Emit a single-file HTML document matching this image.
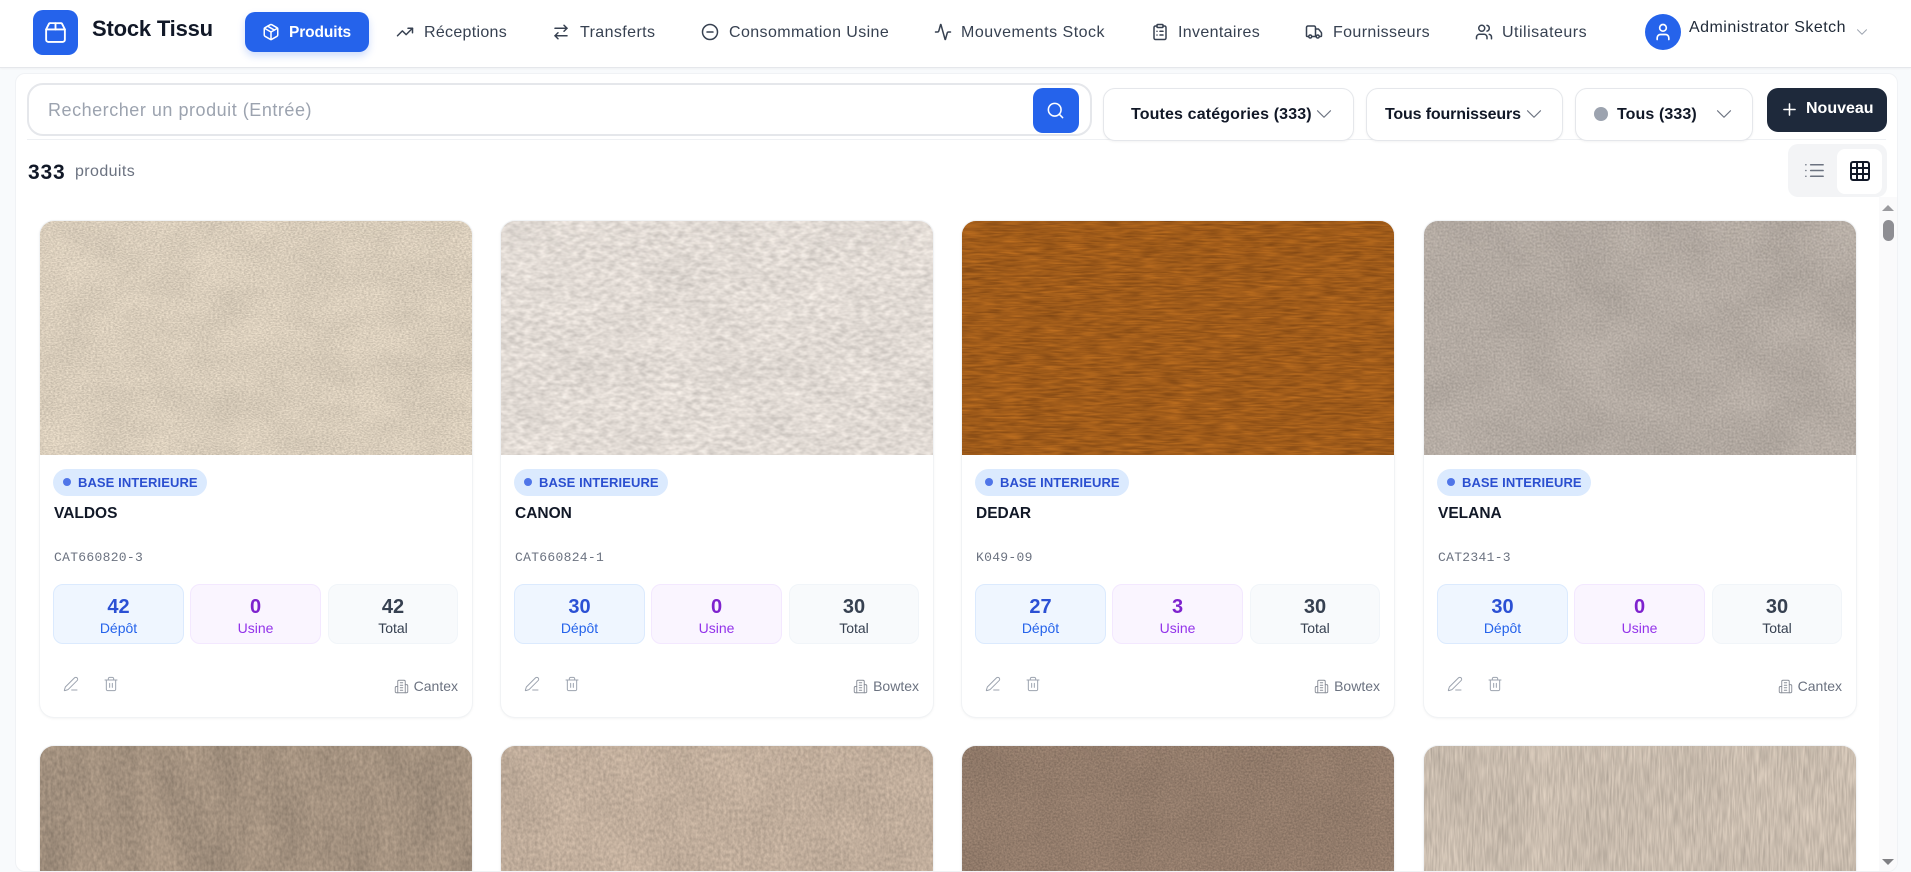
<!DOCTYPE html>
<html lang="fr">
<head>
<meta charset="utf-8">
<title>Stock Tissu</title>
<style>
*{box-sizing:border-box}
html,body{margin:0;padding:0;width:1911px;height:872px;overflow:hidden;background:#f8fafc;font-family:"Liberation Sans",Arial,sans-serif;color:#111827}
.a{position:absolute}
.t{position:absolute;white-space:nowrap;line-height:20px}
svg.i{position:absolute;fill:none;stroke:currentColor;stroke-width:2;stroke-linecap:round;stroke-linejoin:round;display:block}
header{position:absolute;left:0;top:0;width:1911px;height:68px;background:#fff;border-bottom:1px solid #e5e7eb;box-shadow:0 1px 2px rgba(0,0,0,.04)}
.logo{left:33px;top:10px;width:45px;height:45px;border-radius:10px;background:#2563eb}
.act{left:245px;top:12px;width:124px;height:40px;border-radius:10px;background:#2563eb;box-shadow:0 4px 8px rgba(37,99,235,.22)}
.nav{font-size:16px;color:#374151;top:23px;letter-spacing:.4px}
header svg.i{color:#374151}
header .logo svg.i{color:#fff}
main{position:absolute;left:15px;top:73px;width:1883px;height:799px;background:#fff;border:1px solid #f0f2f5;border-radius:10px;overflow:hidden}
.in{position:absolute;left:-16px;top:-74px;width:1911px;height:872px;overflow:hidden}
.search{left:27px;top:83px;width:1065px;height:53px;border:2px solid #e5e7eb;border-radius:16px;background:#fff}
.sbtn{left:1033px;top:88px;width:46px;height:45px;border-radius:10px;background:#2563eb;color:#fff}
.div{left:27px;top:139px;width:1859px;height:1px;background:#eef0f3}
.f{top:88px;height:53px;background:#fff;border:1px solid #e5e7eb;border-radius:12px;box-shadow:0 1px 2px rgba(0,0,0,.05)}
.ft{font-size:16px;font-weight:bold;top:105px;color:#111827}
.new{left:1767px;top:88px;width:120px;height:44px;border-radius:11px;background:#1e293b}
.tog{left:1788px;top:144px;width:99px;height:53px;border-radius:10px;background:#f3f4f6}
.tog2{left:1837px;top:149px;width:45px;height:45px;border-radius:8px;background:#fff}
.track{left:1879px;top:197px;width:19px;height:675px;background:#fafafb}
.thumb{left:1883px;top:220px;width:11px;height:21px;border-radius:6px;background:#8e8e93}
.card{position:absolute;width:432px;height:496px;background:#fff;border-radius:14px;box-shadow:0 0 0 1px #f1f3f5,0 1px 3px rgba(0,0,0,.08);overflow:hidden}
.card.r2{height:126px;border-radius:14px 14px 0 0}
.img{position:absolute;left:0;top:0;width:432px;height:234px;display:block}
.r2 .img{height:126px}
.pill{left:13px;top:248px;width:154px;height:27px;border-radius:14px;background:#dbeafe}
.dot{left:23px;top:257px;width:8px;height:8px;border-radius:50%;background:#4f75e8}
.pt{left:38px;top:252px;font-size:13px;font-weight:bold;color:#2b4fd0;letter-spacing:.08px}
.name{left:14px;top:283px;font-size:15.5px;font-weight:bold;color:#111827}
.code{left:14px;top:327px;font-family:"Liberation Mono",monospace;font-size:13px;letter-spacing:.3px;color:#6b7280}
.st{position:absolute;top:363px;height:60px;border-radius:10px;border:1px solid;text-align:center}
.st b{display:block;font-size:20px;line-height:22px;margin-top:11px}
.st span{display:block;font-size:14px;line-height:20px;margin-top:0}
.s1{left:13px;width:131px;background:#eff6ff;border-color:#dbeafe;color:#2563eb}
.s1 b{color:#2b50d4}
.s2{left:150px;width:131px;background:#faf5ff;border-color:#f3e8ff;color:#9333ea}
.s2 b{color:#7e22ce}
.s3{left:288px;width:130px;background:#f8fafc;border-color:#f1f5f9;color:#374151}
.sup{position:absolute;right:14px;top:455px;height:20px;display:flex;align-items:center;font-size:14px;color:#6b7280}
.sup svg{position:static;margin-right:5px;color:#8a8f99}
.ed{color:#9ca3af}
</style>
</head>
<body>
<svg width="0" height="0" style="position:absolute">
<defs>
<filter id="c1" x="0" y="0" width="100%" height="100%" color-interpolation-filters="sRGB"><feTurbulence type="fractalNoise" baseFrequency=".02 .03" numOctaves="4" seed="3"/><feColorMatrix values=".17 0 0 0 .762 .16 0 0 0 .72 .146 0 0 0 .656 0 0 0 0 1"/></filter>
<filter id="n1" x="0" y="0" width="100%" height="100%" color-interpolation-filters="sRGB"><feTurbulence type="fractalNoise" baseFrequency=".45 .75" numOctaves="2" seed="5"/><feColorMatrix values=".508 0 0 0 .593 .48 0 0 0 .56 .437 0 0 0 .51 0 0 0 0 1"/></filter>
<filter id="c2" x="0" y="0" width="100%" height="100%" color-interpolation-filters="sRGB"><feTurbulence type="fractalNoise" baseFrequency=".02 .03" numOctaves="3" seed="9"/><feColorMatrix values=".176 0 0 0 .79 .17 0 0 0 .766 .165 0 0 0 .744 0 0 0 0 1"/></filter>
<filter id="n2" x="0" y="0" width="100%" height="100%" color-interpolation-filters="sRGB"><feTurbulence type="fractalNoise" baseFrequency=".13 .24" numOctaves="2" seed="7"/><feColorMatrix values=".4 0 0 0 .685 .39 0 0 0 .664 .38 0 0 0 .645 0 0 0 0 1"/></filter>
<filter id="c3" x="0" y="0" width="100%" height="100%" color-interpolation-filters="sRGB"><feTurbulence type="fractalNoise" baseFrequency=".03 .05" numOctaves="4" seed="11"/><feColorMatrix values=".18 0 0 0 .55 .11 0 0 0 .31 .03 0 0 0 .09 0 0 0 0 1"/></filter>
<filter id="n3" x="0" y="0" width="100%" height="100%" color-interpolation-filters="sRGB"><feTurbulence type="fractalNoise" baseFrequency=".05 .55" numOctaves="2" seed="13"/><feColorMatrix values=".5 0 0 0 .37 .33 0 0 0 .19 .1 0 0 0 .05 0 0 0 0 1"/></filter>
<filter id="c4" x="0" y="0" width="100%" height="100%" color-interpolation-filters="sRGB"><feTurbulence type="fractalNoise" baseFrequency=".015 .02" numOctaves="4" seed="21"/><feColorMatrix values=".14 0 0 0 .632 .133 0 0 0 .6 .127 0 0 0 .572 0 0 0 0 1"/></filter>
<filter id="n4" x="0" y="0" width="100%" height="100%" color-interpolation-filters="sRGB"><feTurbulence type="fractalNoise" baseFrequency=".5 .5" numOctaves="2" seed="23"/><feColorMatrix values=".421 0 0 0 .491 .4 0 0 0 .467 .381 0 0 0 .445 0 0 0 0 1"/></filter>
<filter id="c5" x="0" y="0" width="100%" height="100%" color-interpolation-filters="sRGB"><feTurbulence type="fractalNoise" baseFrequency=".03 .012" numOctaves="4" seed="31"/><feColorMatrix values=".25 0 0 0 .515 .22 0 0 0 .459 .19 0 0 0 .403 0 0 0 0 1"/></filter>
<filter id="n5" x="0" y="0" width="100%" height="100%" color-interpolation-filters="sRGB"><feTurbulence type="fractalNoise" baseFrequency=".35 .2" numOctaves="2" seed="33"/><feColorMatrix values=".383 0 0 0 .447 .341 0 0 0 .398 .299 0 0 0 .349 0 0 0 0 1"/></filter>
<filter id="c6" x="0" y="0" width="100%" height="100%" color-interpolation-filters="sRGB"><feTurbulence type="fractalNoise" baseFrequency=".02 .015" numOctaves="4" seed="41"/><feColorMatrix values=".15 0 0 0 .678 .136 0 0 0 .61 .122 0 0 0 .547 0 0 0 0 1"/></filter>
<filter id="n6" x="0" y="0" width="100%" height="100%" color-interpolation-filters="sRGB"><feTurbulence type="fractalNoise" baseFrequency=".35 .25" numOctaves="2" seed="43"/><feColorMatrix values=".452 0 0 0 .527 .407 0 0 0 .475 .365 0 0 0 .426 0 0 0 0 1"/></filter>
<filter id="c7" x="0" y="0" width="100%" height="100%" color-interpolation-filters="sRGB"><feTurbulence type="fractalNoise" baseFrequency=".02 .02" numOctaves="4" seed="51"/><feColorMatrix values=".115 0 0 0 .518 .097 0 0 0 .437 .084 0 0 0 .378 0 0 0 0 1"/></filter>
<filter id="n7" x="0" y="0" width="100%" height="100%" color-interpolation-filters="sRGB"><feTurbulence type="fractalNoise" baseFrequency=".55 .55" numOctaves="2" seed="53"/><feColorMatrix values=".346 0 0 0 .403 .292 0 0 0 .34 .252 0 0 0 .294 0 0 0 0 1"/></filter>
<filter id="c8" x="0" y="0" width="100%" height="100%" color-interpolation-filters="sRGB"><feTurbulence type="fractalNoise" baseFrequency=".02 .01" numOctaves="3" seed="61"/><feColorMatrix values=".158 0 0 0 .709 .147 0 0 0 .663 .136 0 0 0 .614 0 0 0 0 1"/></filter>
<filter id="n8" x="0" y="0" width="100%" height="100%" color-interpolation-filters="sRGB"><feTurbulence type="fractalNoise" baseFrequency=".6 .05" numOctaves="2" seed="63"/><feColorMatrix values=".473 0 0 0 .552 .442 0 0 0 .516 .409 0 0 0 .477 0 0 0 0 1"/></filter>
<symbol id="pen" viewBox="0 0 24 24"><path d="M13 21h8"/><path d="M21.174 6.812a1 1 0 0 0-3.986-3.987L3.842 16.174a2 2 0 0 0-.5.83l-1.321 4.352a.5.5 0 0 0 .623.622l4.353-1.32a2 2 0 0 0 .83-.497z"/></symbol>
<symbol id="trash" viewBox="0 0 24 24"><path d="M3 6h18"/><path d="M19 6v14c0 1-1 2-2 2H7c-1 0-2-1-2-2V6"/><path d="M8 6V4c0-1 1-2 2-2h4c1 0 2 1 2 2v2"/><path d="M10 11v6"/><path d="M14 11v6"/></symbol>
<symbol id="bld" viewBox="0 0 24 24"><path d="M6 22V4a2 2 0 0 1 2-2h8a2 2 0 0 1 2 2v18Z"/><path d="M6 12H4a2 2 0 0 0-2 2v6a2 2 0 0 0 2 2h2"/><path d="M18 9h2a2 2 0 0 1 2 2v9a2 2 0 0 1-2 2h-2"/><path d="M10 6h4"/><path d="M10 10h4"/><path d="M10 14h4"/><path d="M10 18h4"/></symbol>
<symbol id="chev" viewBox="0 0 24 24"><path d="m6 9 6 6 6-6"/></symbol>
</defs>
</svg>

<main><div class="in">
  <div class="a search"></div>
  <div class="t" style="left:48px;top:100px;font-size:18px;color:#9ca3af;letter-spacing:.53px">Rechercher un produit (Entrée)</div>
  <div class="a sbtn"><svg class="i" style="left:13px;top:13px" width="19" height="19" viewBox="0 0 24 24"><circle cx="11" cy="11" r="8"/><path d="m21 21-4.3-4.3"/></svg></div>
  <div class="a div"></div>

  <div class="a f" style="left:1103px;width:251px"></div>
  <div class="t ft" style="left:1131px;letter-spacing:.14px">Toutes catégories (333)</div>
  <svg class="i" style="left:1311px;top:101px;color:#6b7280;stroke-width:1.1" width="26" height="26"><use href="#chev"/></svg>

  <div class="a f" style="left:1366px;width:197px"></div>
  <div class="t ft" style="left:1385px;letter-spacing:-.15px">Tous fournisseurs</div>
  <svg class="i" style="left:1521px;top:101px;color:#6b7280;stroke-width:1.1" width="26" height="26"><use href="#chev"/></svg>

  <div class="a f" style="left:1575px;width:178px"></div>
  <div class="a" style="left:1594px;top:107px;width:14px;height:14px;border-radius:50%;background:#9ca3af"></div>
  <div class="t ft" style="left:1617px;letter-spacing:.1px">Tous (333)</div>
  <svg class="i" style="left:1711px;top:101px;color:#6b7280;stroke-width:1.1" width="26" height="26"><use href="#chev"/></svg>

  <div class="a new"></div>
  <svg class="i" style="left:1780px;top:100px;color:#fff" width="19" height="19" viewBox="0 0 24 24"><path d="M5 12h14"/><path d="M12 5v14"/></svg>
  <div class="t" style="left:1806px;top:99px;font-size:16px;font-weight:bold;color:#fff">Nouveau</div>

  <div class="t" style="left:28px;top:163px;font-size:21px;font-weight:bold;letter-spacing:.8px;color:#111827">333</div>
  <div class="t" style="left:75px;top:162px;font-size:16px;color:#6b7280;letter-spacing:.4px">produits</div>

  <div class="a tog"></div><div class="a tog2"></div>
  <svg class="i" style="left:1803px;top:159px;color:#6b7280;stroke-width:1.6" width="23" height="23" viewBox="0 0 24 24"><path d="M3 12h.01"/><path d="M3 18h.01"/><path d="M3 6h.01"/><path d="M8 12h13"/><path d="M8 18h13"/><path d="M8 6h13"/></svg>
  <svg class="i" style="left:1848px;top:159px;color:#111827" width="24" height="24" viewBox="0 0 24 24"><rect x="3" y="3" width="18" height="18" rx="2"/><path d="M3 9h18"/><path d="M3 15h18"/><path d="M9 3v18"/><path d="M15 3v18"/></svg>

  <div class="a track"></div>
  <div class="a" style="left:1882px;top:205px;width:0;height:0;border-left:6.5px solid transparent;border-right:6.5px solid transparent;border-bottom:6px solid #9a9a9e"></div>
  <div class="a thumb"></div>
  <div class="a" style="left:1882px;top:859px;width:0;height:0;border-left:6.5px solid transparent;border-right:6.5px solid transparent;border-top:6px solid #808084"></div>

  <!-- row 1 -->
  <div class="card" style="left:40px;top:221px">
    <svg class="img" viewBox="0 0 432 234"><rect width="432" height="234" filter="url(#c1)"/><rect width="432" height="234" filter="url(#n1)" opacity=".55"/></svg>
    <div class="a pill"></div><div class="a dot"></div><div class="t pt">BASE INTERIEURE</div>
    <div class="t name">VALDOS</div><div class="t code">CAT660820-3</div>
    <div class="st s1"><b>42</b><span>Dépôt</span></div>
    <div class="st s2"><b>0</b><span>Usine</span></div>
    <div class="st s3"><b>42</b><span>Total</span></div>
    <svg class="i ed" style="left:23px;top:455px;stroke-width:1.5" width="16" height="16"><use href="#pen"/></svg>
    <svg class="i ed" style="left:63px;top:455px;stroke-width:1.5" width="16" height="16"><use href="#trash"/></svg>
    <div class="sup"><svg class="i" style="stroke-width:1.5" width="15" height="15"><use href="#bld"/></svg>Cantex</div>
  </div>
  <div class="card" style="left:501px;top:221px">
    <svg class="img" viewBox="0 0 432 234"><rect width="432" height="234" filter="url(#c2)"/><rect width="432" height="234" filter="url(#n2)" opacity=".6"/></svg>
    <div class="a pill"></div><div class="a dot"></div><div class="t pt">BASE INTERIEURE</div>
    <div class="t name">CANON</div><div class="t code">CAT660824-1</div>
    <div class="st s1"><b>30</b><span>Dépôt</span></div>
    <div class="st s2"><b>0</b><span>Usine</span></div>
    <div class="st s3"><b>30</b><span>Total</span></div>
    <svg class="i ed" style="left:23px;top:455px;stroke-width:1.5" width="16" height="16"><use href="#pen"/></svg>
    <svg class="i ed" style="left:63px;top:455px;stroke-width:1.5" width="16" height="16"><use href="#trash"/></svg>
    <div class="sup"><svg class="i" style="stroke-width:1.5" width="15" height="15"><use href="#bld"/></svg>Bowtex</div>
  </div>
  <div class="card" style="left:962px;top:221px">
    <svg class="img" viewBox="0 0 432 234"><rect width="432" height="234" filter="url(#c3)"/><rect width="432" height="234" filter="url(#n3)" opacity=".6"/></svg>
    <div class="a pill"></div><div class="a dot"></div><div class="t pt">BASE INTERIEURE</div>
    <div class="t name">DEDAR</div><div class="t code">K049-09</div>
    <div class="st s1"><b>27</b><span>Dépôt</span></div>
    <div class="st s2"><b>3</b><span>Usine</span></div>
    <div class="st s3"><b>30</b><span>Total</span></div>
    <svg class="i ed" style="left:23px;top:455px;stroke-width:1.5" width="16" height="16"><use href="#pen"/></svg>
    <svg class="i ed" style="left:63px;top:455px;stroke-width:1.5" width="16" height="16"><use href="#trash"/></svg>
    <div class="sup"><svg class="i" style="stroke-width:1.5" width="15" height="15"><use href="#bld"/></svg>Bowtex</div>
  </div>
  <div class="card" style="left:1424px;top:221px">
    <svg class="img" viewBox="0 0 432 234"><rect width="432" height="234" filter="url(#c4)"/><rect width="432" height="234" filter="url(#n4)" opacity=".45"/></svg>
    <div class="a pill"></div><div class="a dot"></div><div class="t pt">BASE INTERIEURE</div>
    <div class="t name">VELANA</div><div class="t code">CAT2341-3</div>
    <div class="st s1"><b>30</b><span>Dépôt</span></div>
    <div class="st s2"><b>0</b><span>Usine</span></div>
    <div class="st s3"><b>30</b><span>Total</span></div>
    <svg class="i ed" style="left:23px;top:455px;stroke-width:1.5" width="16" height="16"><use href="#pen"/></svg>
    <svg class="i ed" style="left:63px;top:455px;stroke-width:1.5" width="16" height="16"><use href="#trash"/></svg>
    <div class="sup"><svg class="i" style="stroke-width:1.5" width="15" height="15"><use href="#bld"/></svg>Cantex</div>
  </div>

  <!-- row 2 -->
  <div class="card r2" style="left:40px;top:746px"><svg class="img" viewBox="0 0 432 126"><rect width="432" height="126" filter="url(#c5)"/><rect width="432" height="126" filter="url(#n5)" opacity=".5"/></svg></div>
  <div class="card r2" style="left:501px;top:746px"><svg class="img" viewBox="0 0 432 126"><rect width="432" height="126" filter="url(#c6)"/><rect width="432" height="126" filter="url(#n6)" opacity=".45"/></svg></div>
  <div class="card r2" style="left:962px;top:746px"><svg class="img" viewBox="0 0 432 126"><rect width="432" height="126" filter="url(#c7)"/><rect width="432" height="126" filter="url(#n7)" opacity=".6"/></svg></div>
  <div class="card r2" style="left:1424px;top:746px"><svg class="img" viewBox="0 0 432 126"><rect width="432" height="126" filter="url(#c8)"/><rect width="432" height="126" filter="url(#n8)" opacity=".5"/></svg></div>
</div></main>

<header>
  <div class="a logo"><svg class="i" style="left:10px;top:10px;stroke-width:1.8" width="25" height="25" viewBox="0 0 24 24"><path d="M3 9h18v10a2 2 0 0 1-2 2H5a2 2 0 0 1-2-2V9Z"/><path d="m3 9 2.45-4.9A2 2 0 0 1 7.24 3h9.52a2 2 0 0 1 1.8 1.1L21 9"/><path d="M12 3v6"/></svg></div>
  <div class="t" style="left:92px;top:19px;font-size:22px;font-weight:bold;letter-spacing:-.2px;color:#111827">Stock Tissu</div>

  <div class="a act"></div>
  <svg class="i" style="left:262px;top:23px;color:#fff" width="18" height="18" viewBox="0 0 24 24"><path d="M11 21.73a2 2 0 0 0 2 0l7-4A2 2 0 0 0 21 16V8a2 2 0 0 0-1-1.73l-7-4a2 2 0 0 0-2 0l-7 4A2 2 0 0 0 3 8v8a2 2 0 0 0 1 1.73z"/><path d="M12 22V12"/><path d="m3.3 7 8.7 5 8.7-5"/><path d="m7.5 4.27 9 5.15"/></svg>
  <div class="t" style="left:289px;top:23px;font-size:15.5px;font-weight:bold;color:#fff;letter-spacing:-.1px">Produits</div>

  <svg class="i" style="left:396px;top:23px" width="18" height="18" viewBox="0 0 24 24"><polyline points="22 7 13.5 15.5 8.5 10.5 2 17"/><polyline points="16 7 22 7 22 13"/></svg>
  <div class="t nav" style="left:424px;letter-spacing:.3px">Réceptions</div>

  <svg class="i" style="left:552px;top:23px" width="18" height="18" viewBox="0 0 24 24"><path d="m16 3 4 4-4 4"/><path d="M20 7H4"/><path d="m8 21-4-4 4-4"/><path d="M4 17h16"/></svg>
  <div class="t nav" style="left:580px">Transferts</div>

  <svg class="i" style="left:701px;top:23px" width="18" height="18" viewBox="0 0 24 24"><circle cx="12" cy="12" r="10"/><path d="M8 12h8"/></svg>
  <div class="t nav" style="left:729px">Consommation Usine</div>

  <svg class="i" style="left:934px;top:23px" width="18" height="18" viewBox="0 0 24 24"><path d="M22 12h-2.48a2 2 0 0 0-1.93 1.46l-2.35 8.36a.25.25 0 0 1-.48 0L9.24 2.18a.25.25 0 0 0-.48 0l-2.35 8.36A2 2 0 0 1 4.49 12H2"/></svg>
  <div class="t nav" style="left:961px;letter-spacing:.5px">Mouvements Stock</div>

  <svg class="i" style="left:1151px;top:23px" width="18" height="18" viewBox="0 0 24 24"><rect x="8" y="2" width="8" height="4" rx="1"/><path d="M16 4h2a2 2 0 0 1 2 2v14a2 2 0 0 1-2 2H6a2 2 0 0 1-2-2V6a2 2 0 0 1 2-2h2"/><path d="M12 11h4"/><path d="M12 16h4"/><path d="M8 11h.01"/><path d="M8 16h.01"/></svg>
  <div class="t nav" style="left:1178px;letter-spacing:.35px">Inventaires</div>

  <svg class="i" style="left:1305px;top:23px" width="18" height="18" viewBox="0 0 24 24"><path d="M14 18V6a2 2 0 0 0-2-2H4a2 2 0 0 0-2 2v11a1 1 0 0 0 1 1h2"/><path d="M15 18H9"/><path d="M19 18h2a1 1 0 0 0 1-1v-3.65a1 1 0 0 0-.22-.624l-3.48-4.35A1 1 0 0 0 17.52 8H14"/><circle cx="17" cy="18" r="2"/><circle cx="7" cy="18" r="2"/></svg>
  <div class="t nav" style="left:1333px;letter-spacing:.38px">Fournisseurs</div>

  <svg class="i" style="left:1475px;top:23px" width="18" height="18" viewBox="0 0 24 24"><path d="M16 21v-2a4 4 0 0 0-4-4H6a4 4 0 0 0-4 4v2"/><circle cx="9" cy="7" r="4"/><path d="M22 21v-2a4 4 0 0 0-3-3.87"/><path d="M16 3.13a4 4 0 0 1 0 7.75"/></svg>
  <div class="t nav" style="left:1502px;letter-spacing:.5px">Utilisateurs</div>

  <div class="a" style="left:1645px;top:14px;width:36px;height:36px;border-radius:50%;background:#2563eb"></div>
  <svg class="i" style="left:1653px;top:22px;color:#fff" width="20" height="20" viewBox="0 0 24 24"><path d="M19 21v-2a4 4 0 0 0-4-4H9a4 4 0 0 0-4 4v2"/><circle cx="12" cy="7" r="4"/></svg>
  <div class="t" style="left:1689px;top:18px;font-size:16px;letter-spacing:.47px;color:#1f2937">Administrator Sketch</div>
  <svg class="i" style="left:1853px;top:23px;color:#9ca3af;stroke-width:1.3" width="18" height="18"><use href="#chev"/></svg>
</header>
</body>
</html>
